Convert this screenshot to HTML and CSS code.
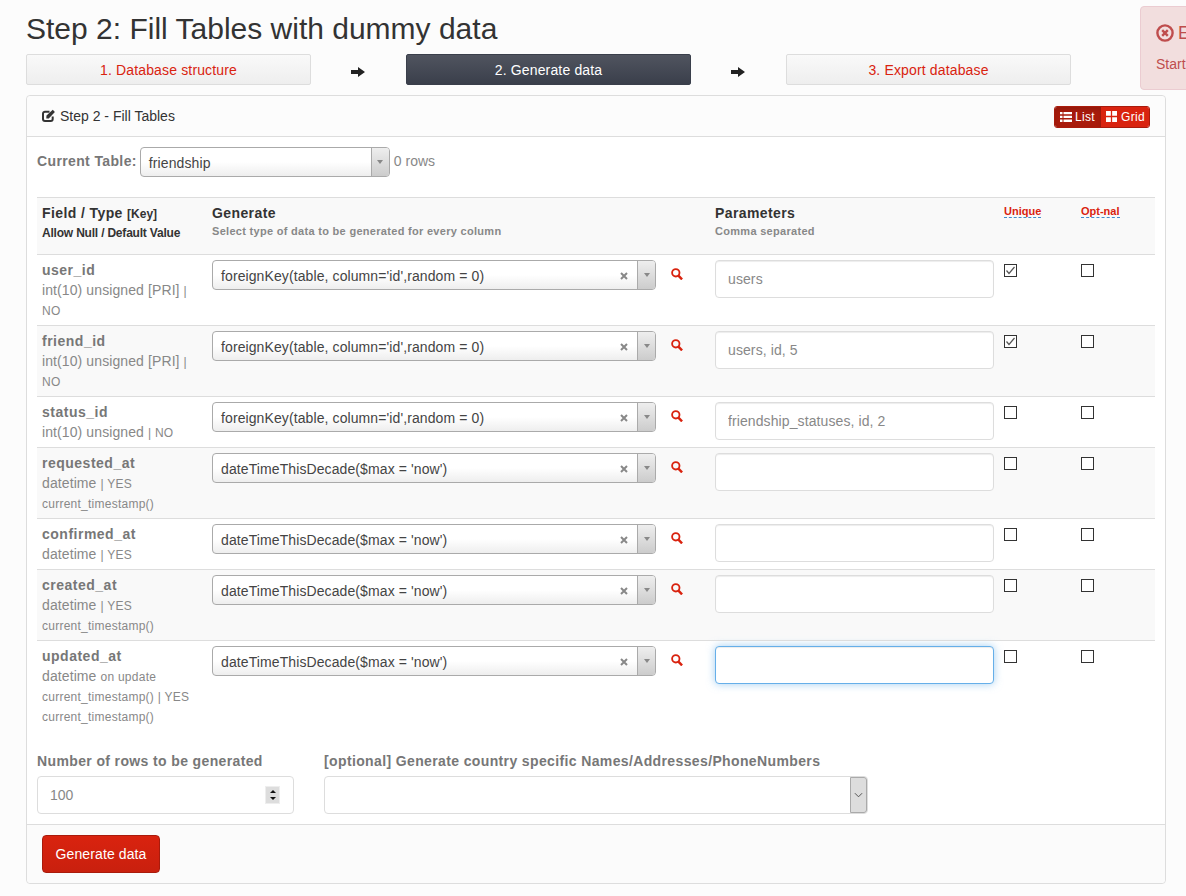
FILE: index.html
```html
<!DOCTYPE html>
<html lang="en">
<head>
<meta charset="utf-8">
<title>Step 2: Fill Tables with dummy data</title>
<link rel="stylesheet" href="styles.css">
</head>
<body>
<svg class="defs" aria-hidden="true">
  <symbol id="i-search" viewBox="0.4 0.4 13 13"><circle cx="5.6" cy="5.6" r="4" fill="none" stroke="currentColor" stroke-width="2"/><path d="M8.4 8.6 12.4 12.8" fill="none" stroke="currentColor" stroke-width="2.6"/></symbol>
  <symbol id="i-x" viewBox="0 0 8 8"><path d="M1 1 7 7M7 1 1 7" fill="none" stroke="currentColor" stroke-width="2"/></symbol>
  <symbol id="i-arrow" viewBox="0 0 14 12"><path d="M0 4H7V1L14 6 7 11V8H0Z" fill="currentColor"/></symbol>
  <symbol id="i-check" viewBox="0 0 13 13"><path d="M2.5 6.5 5 9.5 10.5 3" fill="none" stroke="currentColor" stroke-width="1.2"/></symbol>
</svg>
<main class="page">
  <h1 class="title">Step 2: Fill Tables with dummy data</h1>
  <nav class="steps">
    <a class="step">1. Database structure</a>
    <span class="step-arrow"><svg class="arrow-icon"><use href="#i-arrow"/></svg></span>
    <a class="step step-active">2. Generate data</a>
    <span class="step-arrow"><svg class="arrow-icon"><use href="#i-arrow"/></svg></span>
    <a class="step">3. Export database</a>
  </nav>
  <section class="panel">
    <header class="panel-heading">
      <div class="panel-title">
        <svg class="edit-icon" viewBox="0 0 14 14"><path d="M7.5 2.7H3A2 2 0 0 0 1 4.7V10A2 2 0 0 0 3 12H8.7A2 2 0 0 0 10.7 10V7.5" fill="none" stroke="currentColor" stroke-width="2"/><path d="M4.5 6.6 10.8 .8 12.9 3 6.8 9.4 4.3 9.6Z" fill="currentColor"/></svg>
        <span>Step 2 - Fill Tables</span>
      </div>
      <div class="view-toggle">
        <a class="view-btn view-btn-active">
          <svg class="view-icon" viewBox="0 0 12 12"><path d="M0 1H2.5V3.3H0ZM3.5 1H12V3.3H3.5ZM0 4.8H2.5V7.1H0ZM3.5 4.8H12V7.1H3.5ZM0 8.6H2.5V10.9H0ZM3.5 8.6H12V10.9H3.5Z" fill="currentColor"/></svg>List</a>
        <a class="view-btn">
          <svg class="view-icon view-icon-grid" viewBox="0 0 12 12"><path d="M0 0H5.3V5.3H0ZM6.7 0H12V5.3H6.7ZM0 6.7H5.3V12H0ZM6.7 6.7H12V12H6.7Z" fill="currentColor"/></svg>Grid</a>
      </div>
    </header>
    <div class="panel-body">
      <div class="current-table">
        <label class="field-label">Current Table:</label>
        <div class="sel sel-small"><span class="sel-text">friendship</span><span class="sel-arrow"><i class="tri"></i></span></div>
        <span class="rows-count">0 rows</span>
      </div>
      <table class="fields">
        <colgroup><col class="c-field"><col class="c-gen"><col class="c-par"><col class="c-uni"><col class="c-opt"></colgroup>
        <thead>
          <tr>
            <th><div class="h-main">Field / Type <small class="h-key">[Key]</small></div><div class="h-null">Allow Null / Default Value</div></th>
            <th><div class="h-main">Generate</div><div class="h-sub">Select type of data to be generated for every column</div></th>
            <th><div class="h-main">Parameters</div><div class="h-sub">Comma separated</div></th>
            <th><abbr class="h-abbr">Unique</abbr></th>
            <th><abbr class="h-abbr">Opt-nal</abbr></th>
          </tr>
        </thead>
        <tbody>
          <tr>
            <td><div class="f-name">user_id</div><div class="f-type">int(10) unsigned [PRI] <small>|<br>NO</small></div></td>
            <td><div class="gen"><div class="sel"><span class="sel-text">foreignKey(table, column='id',random = 0)</span><svg class="sel-x"><use href="#i-x"/></svg><span class="sel-arrow"><i class="tri"></i></span></div><svg class="search"><use href="#i-search"/></svg></div></td>
            <td><input class="param" type="text" placeholder="users"></td>
            <td><span class="chk"><svg class="chk-mark"><use href="#i-check"/></svg></span></td>
            <td><span class="chk"></span></td>
          </tr>
          <tr>
            <td><div class="f-name">friend_id</div><div class="f-type">int(10) unsigned [PRI] <small>|<br>NO</small></div></td>
            <td><div class="gen"><div class="sel"><span class="sel-text">foreignKey(table, column='id',random = 0)</span><svg class="sel-x"><use href="#i-x"/></svg><span class="sel-arrow"><i class="tri"></i></span></div><svg class="search"><use href="#i-search"/></svg></div></td>
            <td><input class="param" type="text" placeholder="users, id, 5"></td>
            <td><span class="chk"><svg class="chk-mark"><use href="#i-check"/></svg></span></td>
            <td><span class="chk"></span></td>
          </tr>
          <tr>
            <td><div class="f-name">status_id</div><div class="f-type">int(10) unsigned <small>| NO</small></div></td>
            <td><div class="gen"><div class="sel"><span class="sel-text">foreignKey(table, column='id',random = 0)</span><svg class="sel-x"><use href="#i-x"/></svg><span class="sel-arrow"><i class="tri"></i></span></div><svg class="search"><use href="#i-search"/></svg></div></td>
            <td><input class="param" type="text" placeholder="friendship_statuses, id, 2"></td>
            <td><span class="chk"></span></td>
            <td><span class="chk"></span></td>
          </tr>
          <tr>
            <td><div class="f-name">requested_at</div><div class="f-type">datetime <small>| YES<br>current_timestamp()</small></div></td>
            <td><div class="gen"><div class="sel"><span class="sel-text">dateTimeThisDecade($max = 'now')</span><svg class="sel-x"><use href="#i-x"/></svg><span class="sel-arrow"><i class="tri"></i></span></div><svg class="search"><use href="#i-search"/></svg></div></td>
            <td><input class="param" type="text"></td>
            <td><span class="chk"></span></td>
            <td><span class="chk"></span></td>
          </tr>
          <tr>
            <td><div class="f-name">confirmed_at</div><div class="f-type">datetime <small>| YES</small></div></td>
            <td><div class="gen"><div class="sel"><span class="sel-text">dateTimeThisDecade($max = 'now')</span><svg class="sel-x"><use href="#i-x"/></svg><span class="sel-arrow"><i class="tri"></i></span></div><svg class="search"><use href="#i-search"/></svg></div></td>
            <td><input class="param" type="text"></td>
            <td><span class="chk"></span></td>
            <td><span class="chk"></span></td>
          </tr>
          <tr>
            <td><div class="f-name">created_at</div><div class="f-type">datetime <small>| YES<br>current_timestamp()</small></div></td>
            <td><div class="gen"><div class="sel"><span class="sel-text">dateTimeThisDecade($max = 'now')</span><svg class="sel-x"><use href="#i-x"/></svg><span class="sel-arrow"><i class="tri"></i></span></div><svg class="search"><use href="#i-search"/></svg></div></td>
            <td><input class="param" type="text"></td>
            <td><span class="chk"></span></td>
            <td><span class="chk"></span></td>
          </tr>
          <tr>
            <td><div class="f-name">updated_at</div><div class="f-type">datetime <small>on update<br>current_timestamp() | YES<br>current_timestamp()</small></div></td>
            <td><div class="gen"><div class="sel"><span class="sel-text">dateTimeThisDecade($max = 'now')</span><svg class="sel-x"><use href="#i-x"/></svg><span class="sel-arrow"><i class="tri"></i></span></div><svg class="search"><use href="#i-search"/></svg></div></td>
            <td><input class="param param-focus" type="text"></td>
            <td><span class="chk"></span></td>
            <td><span class="chk"></span></td>
          </tr>
        </tbody>
      </table>
      <div class="options">
        <div class="opt-rows">
          <label class="field-label opt-label">Number of rows to be generated</label>
          <div class="num-box">
            <span class="num-value">100</span>
            <span class="spin"><i class="spin-up"></i><i class="spin-down"></i></span>
          </div>
        </div>
        <div class="opt-country">
          <label class="field-label opt-label">[optional] Generate country specific Names/Addresses/PhoneNumbers</label>
          <div class="native-sel"><span class="native-btn"><svg class="chev" viewBox="0 0 10 6"><path d="M1 1 5 5 9 1" fill="none" stroke="currentColor" stroke-width="1"/></svg></span></div>
        </div>
      </div>
    </div>
    <footer class="panel-footer"><button class="primary" type="button">Generate data</button></footer>
  </section>
</main>
<aside class="alert">
  <div class="alert-title"><svg class="alert-icon" viewBox="0 0 18 18"><circle cx="9" cy="9" r="7.6" fill="none" stroke="currentColor" stroke-width="2.4"/><path d="M6.2 6.2 11.8 11.8M11.8 6.2 6.2 11.8" fill="none" stroke="currentColor" stroke-width="2.4"/></svg><span>Error</span></div>
  <div class="alert-text">Start generating</div>
</aside>
</body>
</html>
```
FILE: styles.css
```css
* { box-sizing: border-box; }
html, body { height: 100%; overflow: hidden; }
body { margin: 0; background: #fcfcfc; color: #333; font: 14px/20px "Liberation Sans", Arial, sans-serif; }
.defs { position: absolute; width: 0; height: 0; }
.page { width: 1140px; margin-left: 26px; }
.title { margin: 0; padding-top: 12px; font-size: 30px; line-height: 33px; font-weight: 400; color: #333; }
.steps { display: flex; margin: 9px 0 10px; padding-right: 95px; }
.step { width: 285px; height: 31px; line-height: 30px; text-align: center; color: #d9230f; letter-spacing: .15px; border: 1px solid #ddd; border-radius: 2px; background: linear-gradient(#f9f9f9, #eeeeee); }
.step-active { color: #fff; border-color: #3a3f4b; background: linear-gradient(#50545f, #3a3f4b); }
.step-arrow { width: 95px; display: flex; justify-content: center; padding: 12px 1px 0 0; color: #222; }
.arrow-icon { width: 14px; height: 12px; }
.panel { height: 789px; border: 1px solid #ddd; border-radius: 4px; background: #fff; display: flex; flex-direction: column; }
.panel-heading { height: 41px; flex: none; padding: 1px 15px 0; background: #fcfcfc; border-bottom: 1px solid #ddd; display: flex; justify-content: space-between; align-items: center; border-radius: 4px 4px 0 0; }
.panel-title { display: flex; align-items: center; gap: 4px; margin-top: -2px; }
.edit-icon { width: 14px; height: 14px; color: #333; }
.view-toggle { display: flex; height: 22px; border-radius: 3px; overflow: hidden; border: 1px solid #a91b0c; }
.view-btn { display: flex; align-items: center; gap: 3px; width: 48px; padding: 0 0 0 5px; font-size: 12px; line-height: 20px; letter-spacing: .3px; color: #fff; background: #d9230f; }
.view-btn-active { width: 46px; background: #a91b0c; box-shadow: inset 0 3px 5px rgba(0,0,0,.125); }
.view-icon { width: 12px; height: 12px; flex: none; }
.view-icon-grid { width: 11px; height: 11px; margin-right: 1px; }
.panel-body { flex: 1; padding: 10px 10px 0; }
.field-label { font-weight: 700; color: #777; letter-spacing: .37px; }
.current-table { display: flex; align-items: flex-start; height: 50px; }
.current-table .field-label { margin-right: 3px; line-height: 28px; }
.rows-count { margin-left: 4px; line-height: 28px; color: #888; }
.sel { position: relative; width: 444px; height: 30px; flex: none; border: 1px solid #aaa; border-radius: 4px; background: linear-gradient(#fff 50%, #eee); line-height: 30px; padding-left: 8px; color: #444; letter-spacing: .1px; }
.sel-small { width: 250px; }
.sel-text { display: block; }
.sel-arrow { position: absolute; top: 0; right: 0; bottom: 0; width: 18px; border-left: 1px solid #aaa; border-radius: 0 3px 3px 0; background: linear-gradient(#eee, #ccc); display: flex; justify-content: center; padding-top: 12px; }
.tri { display: block; width: 0; height: 0; border: 3px solid transparent; border-top: 4px solid #888; border-bottom: 0; }
.sel-x { position: absolute; top: 11px; right: 27px; width: 8px; height: 8px; color: #888; }
.fields { width: 1118px; table-layout: fixed; border-collapse: collapse; }
.c-field { width: 170px; }
.c-gen { width: 503px; }
.c-par { width: 289px; }
.c-uni { width: 77px; }
.c-opt { width: 79px; }
.fields th, .fields td { padding: 5px; text-align: left; vertical-align: top; border-top: 1px solid #ddd; }
.fields th { padding-bottom: 11px; background: #f9f9f9; font-weight: 700; }
.fields tbody tr:nth-child(even) td { background: #f9f9f9; }
.h-main { color: #333; line-height: 20px; letter-spacing: .4px; }
.h-key { font-size: 12px; line-height: 1; letter-spacing: 0; }
.h-null { font-size: 12px; line-height: 20px; color: #333; letter-spacing: -.2px; }
.h-sub { font-size: 11px; line-height: 16px; color: #888; letter-spacing: .3px; }
.h-abbr { font-size: 11px; line-height: 11px; color: #d9230f; border-bottom: 1px dashed #428bca; display: inline-block; margin-top: 3px; vertical-align: top; }
.f-name { font-weight: 700; color: #777; letter-spacing: .5px; }
.f-type { color: #888; letter-spacing: .1px; }
.f-type small { font-size: 12px; line-height: 1; letter-spacing: .25px; }
.gen { display: flex; gap: 15px; }
.search { width: 12px; height: 12px; margin-top: 8px; color: #d9230f; }
.param { display: block; width: 279px; height: 38px; padding: 8px 12px; font: 14px/20px "Liberation Sans", Arial, sans-serif; letter-spacing: .1px; color: #555; background: #fff; border: 1px solid #ddd; border-radius: 4px; box-shadow: inset 0 1px 1px rgba(0,0,0,.075); outline: 0; }
.param::placeholder { color: #888; opacity: 1; }
.param-focus { border-color: #66afe9; box-shadow: inset 0 1px 1px rgba(0,0,0,.075), 0 0 8px rgba(102,175,233,.6); }
.chk { display: block; width: 13px; height: 13px; margin-top: 4px; border: 1px solid #333; background: #fff; position: relative; }
.chk-mark { position: absolute; left: -1px; top: -1px; width: 13px; height: 13px; color: #555; }
.options { display: flex; gap: 30px; margin-top: 20px; }
.opt-rows { width: 257px; }
.opt-country { width: 544px; }
.opt-label { display: block; line-height: 20px; margin-bottom: 5px; }
.num-box, .native-sel { position: relative; height: 38px; background: #fff; border: 1px solid #ddd; border-radius: 4px; }
.num-value { display: block; padding: 8px 12px; color: #888; }
.spin { position: absolute; right: 13px; top: 9px; width: 15px; height: 18px; background: linear-gradient(#ddd 47%, #aaa 47% 53%, #ddd 53%); display: flex; flex-direction: column; justify-content: space-between; align-items: center; padding: 3px 0; border: 1px solid #eee; }
.spin-up { width: 0; height: 0; border: 3px solid transparent; border-bottom: 3px solid #111; border-top: 0; }
.spin-down { width: 0; height: 0; border: 3px solid transparent; border-top: 3px solid #111; border-bottom: 0; }
.native-btn { position: absolute; top: 0; right: 0; bottom: 0; width: 17px; background: #ddd; border: 1px solid #aaa; border-radius: 0 3px 3px 0; display: flex; align-items: center; justify-content: center; color: #444; }
.chev { width: 9px; height: 6px; }
.panel-footer { height: 59px; flex: none; padding: 10px 15px; background: #fbfbfb; border-top: 1px solid #ddd; border-radius: 0 0 4px 4px; }
.primary { display: block; width: 118px; height: 38px; padding: 0; font: 14px "Liberation Sans", Arial, sans-serif; letter-spacing: .1px; color: #fff; background: linear-gradient(#d9230f, #c9200e); border: 1px solid #a91b0c; border-radius: 4px; }
.alert { position: absolute; left: 1140px; top: 6px; width: 300px; height: 84px; padding: 15px; background: #f2dede; border: 1px solid #ebccd1; border-radius: 4px; color: #bf4d4d; }
.alert-title { display: flex; align-items: center; gap: 4px; font-size: 18px; line-height: 20px; margin-top: 1px; }
.alert-icon { width: 18px; height: 18px; flex: none; }
.alert-text { margin-top: 11px; }
```
